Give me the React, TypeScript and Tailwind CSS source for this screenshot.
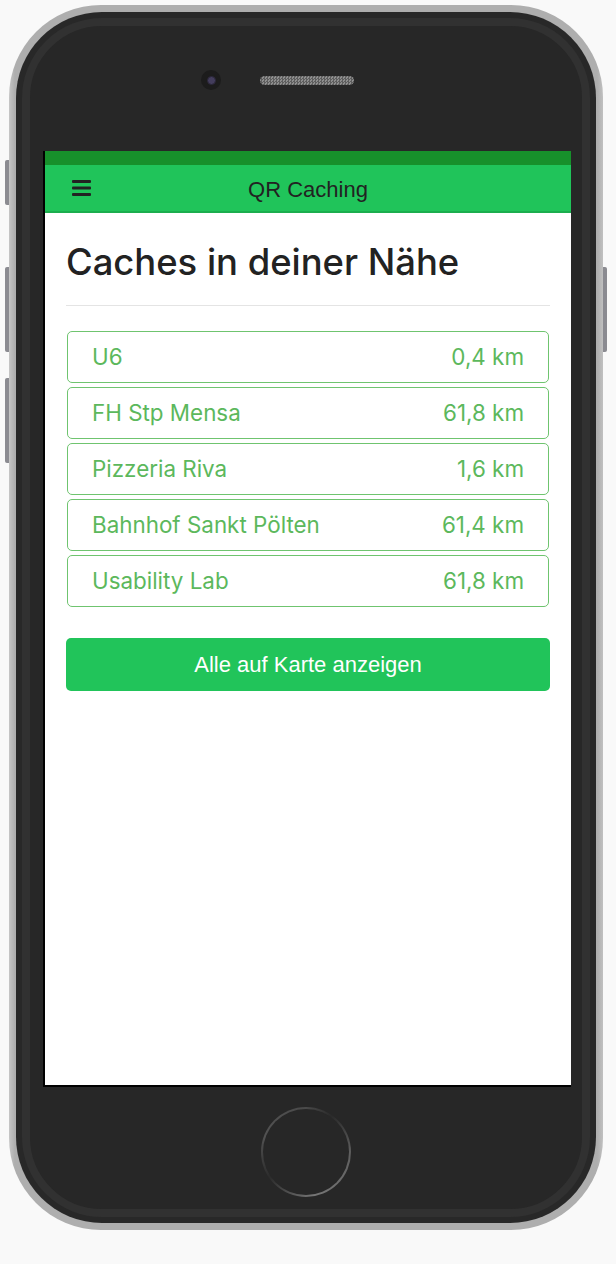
import { Fragment } from 'react'

type Cache = { name: string; distance: string }

const caches: Cache[] = [
  { name: 'U6', distance: '0,4 km' },
  { name: 'FH Stp Mensa', distance: '61,8 km' },
  { name: 'Pizzeria Riva', distance: '1,6 km' },
  { name: 'Bahnhof Sankt Pölten', distance: '61,4 km' },
  { name: 'Usability Lab', distance: '61,8 km' },
]

function MenuIcon() {
  return (
    <svg width="19" height="16" viewBox="0 0 19 16" fill="#222">
      <rect x="0" y="0" width="19" height="3" rx="1" />
      <rect x="0" y="6.5" width="19" height="3" rx="1" />
      <rect x="0" y="13" width="19" height="3" rx="1" />
    </svg>
  )
}

function Screen() {
  return (
    <div className="ml-[13px] w-[528px] h-[936px] border-l-2 border-b-2 border-black bg-white flex flex-col">
      <div className="h-[14px] bg-[#17902b]" />
      <div className="h-[48px] bg-[#20c45a] border-b-2 border-[#1cae4e] grid grid-cols-[1fr_auto_1fr] items-center px-[27px]">
        <div className="flex items-center">
          <MenuIcon />
        </div>
        <span className="mt-[3px] text-[22px] text-[#222] leading-none">QR Caching</span>
        <div />
      </div>

      <div className="px-[21px] pt-[26px]">
        <h1 className="font-['Inter',sans-serif] font-medium text-[36.4px] leading-[46px] text-[#222]">
          Caches in deiner Nähe
        </h1>
        <div className="mt-[20px] h-px bg-[#e4e4e4]" />

        <div className="mt-[25px] mx-px flex flex-col gap-[4px]">
          {caches.map((c) => (
            <div
              key={c.name}
              className="h-[52px] border border-[#6fc46f] rounded-[5px] px-[24px] flex items-center justify-between font-['Inter',sans-serif] text-[22.4px] text-[#5cb85c]"
            >
              <span>{c.name}</span>
              <span>{c.distance}</span>
            </div>
          ))}
        </div>

        <button
          type="button"
          className="mt-[31px] w-full h-[53px] bg-[#21c45a] rounded-[5px] text-white text-[22px] flex items-center justify-center"
        >
          Alle auf Karte anzeigen
        </button>
      </div>
    </div>
  )
}

export default function App() {
  const sideButtons = [
    { top: 'top-[160px]', h: 'h-[45px]' },
    { top: 'top-[267px]', h: 'h-[85px]' },
    { top: 'top-[378px]', h: 'h-[85px]' },
  ]

  return (
    <div className="relative w-[616px] h-[1264px] bg-[#f9f9f9] pt-[5px] pl-[9px] font-['Liberation_Sans',Arial,sans-serif]">
      {sideButtons.map((b, i) => (
        <Fragment key={i}>
          <div className={`absolute left-[5px] w-[5px] rounded-l-[2px] bg-[#8b8b91] ${b.top} ${b.h}`} />
        </Fragment>
      ))}
      <div className="absolute left-[602px] top-[267px] w-[5px] h-[85px] rounded-r-[2px] bg-[#8b8b91]" />

      {/* phone body */}
      <div className="relative w-[594px] h-[1225px] rounded-[92px] bg-[linear-gradient(to_right,#c6c6c6,#aeaeae_1%,#aeaeae_99%,#c0c0c0)] p-[7px]">
        <div className="h-full rounded-[86px] bg-[#282828] p-[6px]">
          <div className="h-full rounded-[80px] border-[8px] border-[#313131] bg-[#272727] flex flex-col">
            <div className="h-[125px] pt-[44px] pl-[171px] flex items-start">
              <div className="w-[20px] h-[20px] rounded-full bg-[#1c1c1c] flex items-center justify-center">
                <div className="w-[9px] h-[9px] rounded-full bg-[#433d5c] border border-[#2a2638]" />
              </div>
              <div className="ml-[39px] mt-[6px] w-[94px] h-[9px] rounded-full bg-[repeating-conic-gradient(#5e5e5e_0_25%,#8e8e8e_0_50%)] bg-[length:3px_3px]" />
            </div>

            <Screen />

            <div className="mt-[20px] ml-[231px] w-[90px] h-[90px] rounded-full p-[2px] bg-[conic-gradient(from_0deg,#4a4a4a,#2a2a2a_35deg,#5e5e5e_90deg,#767676_170deg,#2c2c2c_235deg,#525252_290deg,#4a4a4a)]">
              <div className="w-full h-full rounded-full bg-[#272727]" />
            </div>
          </div>
        </div>
      </div>
    </div>
  )
}
